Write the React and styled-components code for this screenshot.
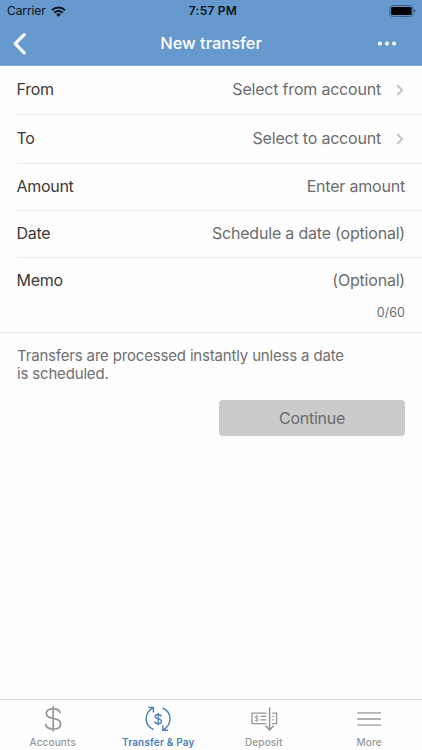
import React from 'react';
import styled, { createGlobalStyle } from 'styled-components';

const GlobalStyle = createGlobalStyle`
  * { box-sizing: border-box; }
  body { margin: 0; background: #fefefe; }
  button { font: inherit; letter-spacing: inherit; border: 0; padding: 0; background: none; }
  svg { display: block; }
`;

const Screen = styled.div`
  display: flex;
  flex-direction: column;
  width: 100%;
  height: 750px;
  background: #fefefe;
  font-family: Inter, 'Liberation Sans', sans-serif;
  font-size: 16px;
  letter-spacing: -0.2px;
`;

const Header = styled.header`
  height: 66px;
  background: #6699cd;
  border-bottom: 1px solid #85addb;
`;

const StatusBar = styled.div`
  display: grid;
  grid-template-columns: 1fr auto 1fr;
  align-items: center;
  height: 22px;
  padding: 0 6px 0 7px;
  font-size: 12px;
  line-height: 22px;
  color: #0b1118;
`;

const Carrier = styled.div`
  display: flex;
  align-items: center;
  gap: 5px;
  letter-spacing: -0.1px;
`;

const Clock = styled.div`
  margin-left: 3px;
  font-weight: 600;
  letter-spacing: 0.25px;
  color: #0b1118;
`;

const BatterySlot = styled.div`
  display: flex;
  justify-content: flex-end;
`;

const NavBar = styled.div`
  display: grid;
  grid-template-columns: 1fr auto 1fr;
  align-items: center;
  height: 43px;
  padding: 0 25px 0 13px;
  color: #fff;
`;

const Title = styled.h1`
  margin: 0 0 0 12px;
  font-size: 16.5px;
  font-weight: 500;
  line-height: 43px;
  letter-spacing: -0.03px;
`;

const IconButton = styled.button`
  color: inherit;
  justify-self: ${(p) => (p.$end ? 'end' : 'start')};
`;

const Form = styled.main`
  flex: 1;
`;

const Fields = styled.div`
  display: flex;
  flex-direction: column;
  padding-left: 17px;
`;

const Row = styled.div`
  display: flex;
  justify-content: space-between;
  height: ${(p) => p.$height}px;
  padding: ${(p) => p.$top}px 17px 0 0;
  line-height: 20px;
  border-bottom: 1px solid #ececec;
`;

const MemoRow = styled(Row)`
  margin-left: -17px;
  padding-left: 17px;
`;

const Label = styled.span`
  margin-left: -0.5px;
  letter-spacing: -0.3px;
  color: #3a3a3a;
`;

const Value = styled.div`
  display: flex;
  gap: 15px;
  height: 20px;
  color: #6c6c6c;
`;

const MemoValue = styled.div`
  display: flex;
  flex-direction: column;
  align-items: flex-end;
  gap: 14px;
  color: #6c6c6c;
`;

const Counter = styled.span`
  font-size: 12.6px;
  line-height: 17px;
  letter-spacing: 0;
`;

const Chevron = styled.svg`
  margin: 5px 1px 0 0;
`;

const Note = styled.p`
  width: 335px;
  margin: 14px 0 0 17px;
  font-size: 15px;
  line-height: 18px;
  letter-spacing: -0.17px;
  color: #6f6f6f;
`;

const ContinueButton = styled.button`
  && {
    display: block;
    width: 186px;
    height: 36px;
    margin: 17px 17px 0 auto;
    border-radius: 4px;
    background: #cbcbcb;
    color: #6a6a6a;
    line-height: 36px;
    letter-spacing: -0.25px;
  }
`;

const TabBar = styled.nav`
  display: grid;
  grid-template-columns: repeat(4, 1fr);
  height: 51px;
  border-top: 1px solid #dadada;
`;

const Tab = styled.div`
  display: flex;
  flex-direction: column;
  align-items: center;
  padding-top: 5px;
  font-size: 10px;
  font-weight: ${(p) => (p.$active ? 600 : 500)};
  line-height: 14px;
  letter-spacing: ${(p) => (p.$active ? 0.16 : 0.15)}px;
  color: ${(p) => (p.$active ? '#477eb8' : '#969696')};
`;

const TabIcon = styled.svg`
  width: 30px;
  height: 30px;
  fill: none;
  stroke: currentColor;
`;

const WifiIcon = () => (
  <svg width="15" height="11" viewBox="0 0 15 11" fill="none" stroke="#0b1118" strokeWidth="2">
    <path d="M1 4.2A9.2 9.2 0 0 1 14 4.2" />
    <path d="M3.4 6.7A5.8 5.8 0 0 1 11.6 6.7" />
    <path d="M5.2 8.4A3.3 3.3 0 0 1 9.8 8.4L7.5 10.8Z" fill="#0b1118" stroke="none" />
  </svg>
);

const BatteryIcon = () => (
  <svg width="27" height="12" viewBox="0 0 27 12">
    <rect x="0.9" y="0.6" width="23" height="10.8" rx="2.5" fill="none" stroke="#3b5c80" />
    <rect x="2.2" y="1.9" width="20.4" height="8.2" rx="1.3" fill="#000" />
    <path d="M25 4.1Q26.4 4.6 26.4 6Q26.4 7.4 25 7.9Z" fill="#3b5c80" />
  </svg>
);

const BackIcon = () => (
  <svg width="14" height="22" viewBox="0 0 14 22" fill="none" stroke="currentColor" strokeWidth="3.2" strokeLinecap="round" strokeLinejoin="round">
    <path d="M11.2 1.6L2.2 10.7L11.2 19.8" />
  </svg>
);

const MoreDots = () => (
  <svg width="20" height="6" viewBox="0 0 20 6" fill="currentColor">
    <circle cx="2.9" cy="2.6" r="2.05" />
    <circle cx="10" cy="2.6" r="2.05" />
    <circle cx="17.1" cy="2.6" r="2.05" />
  </svg>
);

const ChevronIcon = () => (
  <Chevron width="8" height="13" viewBox="0 0 8 13" fill="none" stroke="#c3c3c3" strokeWidth="2">
    <path d="M1.2 1.1L6 6.1L1.2 11.1" />
  </Chevron>
);

const AccountsIcon = () => (
  <TabIcon viewBox="0 0 30 30" strokeWidth="1.7">
    <path d="M15.2 1V26.6M22.2 8.4C22 5.4 19.2 3.8 15.2 3.8C11 3.8 8.3 5.6 8.3 8.6C8.3 15.6 22.7 11.3 22.7 18.9C22.7 22.2 19.6 24 15.3 24C10.7 24 7.9 22.2 7.7 18.9" />
  </TabIcon>
);

const TransferIcon = () => (
  <TabIcon viewBox="0 0 30 30" strokeWidth="1.4">
    <path d="M10.6 24.6C5.5 22.4 3.2 18.8 3.2 14C3.2 9.3 5.8 5.1 10 2.7M5.3 2.4H10.4V7.4" />
    <path d="M19.7 3C24.6 5.3 27 9 27 13.6C27 18.3 24.4 22.6 20.2 25M25 25.2H19.8V20.2" />
    <path d="M15.2 7.8V20.2M18.2 11.5C18.1 10.1 17 9.5 15.2 9.5C13.2 9.5 12.1 10.2 12.1 11.5C12.1 14.8 18.5 12.9 18.5 16.4C18.5 17.8 17.2 18.6 15.2 18.6C13.1 18.6 11.9 17.9 11.8 16.4" strokeWidth="1.3" />
  </TabIcon>
);

const DepositIcon = () => (
  <TabIcon viewBox="0 0 30 30" strokeWidth="1.3">
    <path d="M17.5 8.2H3V18.6H17.5M23.3 8.2H27.6V18.6H23.3M11.4 11.4H17.3M11.4 14.9H17.3M23.3 11.4H24.8M23.3 14.9H24.8" />
    <path d="M20.6 2.5V24.5M16.6 20.9L20.6 24.9L24.6 20.9" strokeWidth="1.5" />
    <path d="M7.8 10V16.8M9.4 11.7C8.5 10.6 6.2 10.8 6.2 12.2C6.2 13.7 9.4 13.1 9.4 14.8C9.4 16.2 7 16.4 6 15.2" strokeWidth="0.9" />
  </TabIcon>
);

const MenuIcon = () => (
  <TabIcon viewBox="0 0 30 30" strokeWidth="1.4">
    <path d="M3.2 7.9H27M3.2 14H27M3.2 20.1H27" />
  </TabIcon>
);

const rows = [
  { label: 'From', value: 'Select from account', height: 49, top: 13, picker: true },
  { label: 'To', value: 'Select to account', height: 49, top: 13, picker: true },
  { label: 'Amount', value: 'Enter amount', height: 47, top: 12 },
  { label: 'Date', value: 'Schedule a date (optional)', height: 47, top: 12 },
];

const tabs = [
  { label: 'Accounts', Icon: AccountsIcon },
  { label: 'Transfer & Pay', Icon: TransferIcon, active: true },
  { label: 'Deposit', Icon: DepositIcon },
  { label: 'More', Icon: MenuIcon },
];

export default function App() {
  return (
    <Screen>
      <GlobalStyle />
      <Header>
        <StatusBar>
          <Carrier>Carrier<WifiIcon /></Carrier>
          <Clock>7:57 PM</Clock>
          <BatterySlot><BatteryIcon /></BatterySlot>
        </StatusBar>
        <NavBar>
          <IconButton aria-label="Back"><BackIcon /></IconButton>
          <Title>New transfer</Title>
          <IconButton $end aria-label="More options"><MoreDots /></IconButton>
        </NavBar>
      </Header>
      <Form>
        <Fields>
          {rows.map((r) => (
            <Row key={r.label} $height={r.height} $top={r.top}>
              <Label>{r.label}</Label>
              <Value>{r.value}{r.picker && <ChevronIcon />}</Value>
            </Row>
          ))}
          <MemoRow $height={75} $top={12}>
            <Label>Memo</Label>
            <MemoValue>
              <span>(Optional)</span>
              <Counter>0/60</Counter>
            </MemoValue>
          </MemoRow>
        </Fields>
        <Note>Transfers are processed instantly unless a date is scheduled.</Note>
        <ContinueButton>Continue</ContinueButton>
      </Form>
      <TabBar>
        {tabs.map(({ label, Icon, active }) => (
          <Tab key={label} $active={active}><Icon />{label}</Tab>
        ))}
      </TabBar>
    </Screen>
  );
}
